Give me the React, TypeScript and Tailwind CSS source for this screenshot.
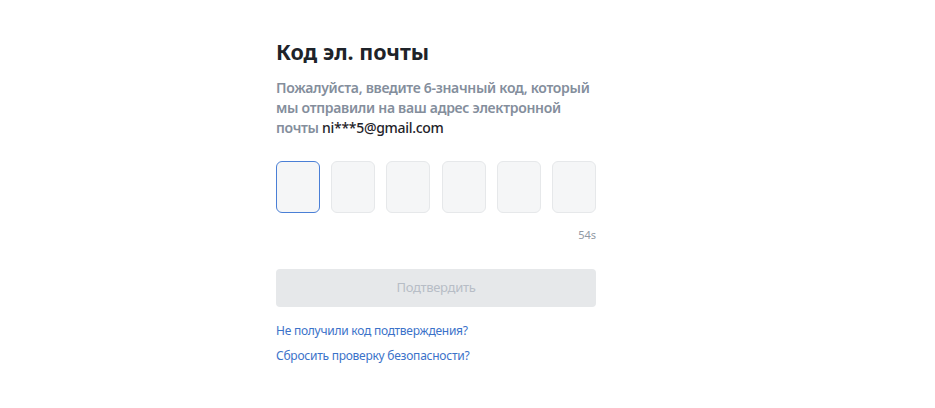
const App = () => {
  const cells = [0, 1, 2, 3, 4, 5];

  return (
    <div className="min-h-[408px] bg-white font-['Noto_Sans',sans-serif]">
      <div className="ml-[276px] w-[320px] pt-[38px]">
        <h1 className="text-[21.5px] leading-[28px] font-bold text-[#1e2329]">Код эл. почты</h1>
        <p className="mt-3 text-sm leading-5 font-semibold tracking-[-0.3px] text-[#848e9c]">
          Пожалуйста, введите 6-значный код, который мы отправили на ваш адрес электронной почты{' '}
          <span className="font-medium text-[#1e2329]">ni***5@gmail.com</span>
        </p>

        <div className="mt-[23px] flex justify-between">
          {cells.map((i) => (
            <div
              key={i}
              className={
                i === 0
                  ? 'h-[52px] w-[44px] rounded-md border border-[#4a7fd6] bg-[#f5f6f7]'
                  : 'h-[52px] w-[44px] rounded-md border border-[#e6e8ea] bg-[#f5f6f7]'
              }
            />
          ))}
        </div>

        <div className="mt-[14px] text-right text-[11px] leading-4 text-[#929aa5]">54s</div>

        <button
          type="button"
          disabled
          className="mt-[26px] flex h-[38px] w-full items-center justify-center rounded bg-[#e6e8ea] text-[13px] tracking-[-0.3px] text-[#b7bdc6]"
        >
          Подтвердить
        </button>

        <div className="mt-4 flex flex-col gap-[9px] text-xs leading-4 tracking-[-0.25px] text-[#3b72c9]">
          <a href="#">Не получили код подтверждения?</a>
          <a href="#">Сбросить проверку безопасности?</a>
        </div>
      </div>
    </div>
  );
};

export default App;
